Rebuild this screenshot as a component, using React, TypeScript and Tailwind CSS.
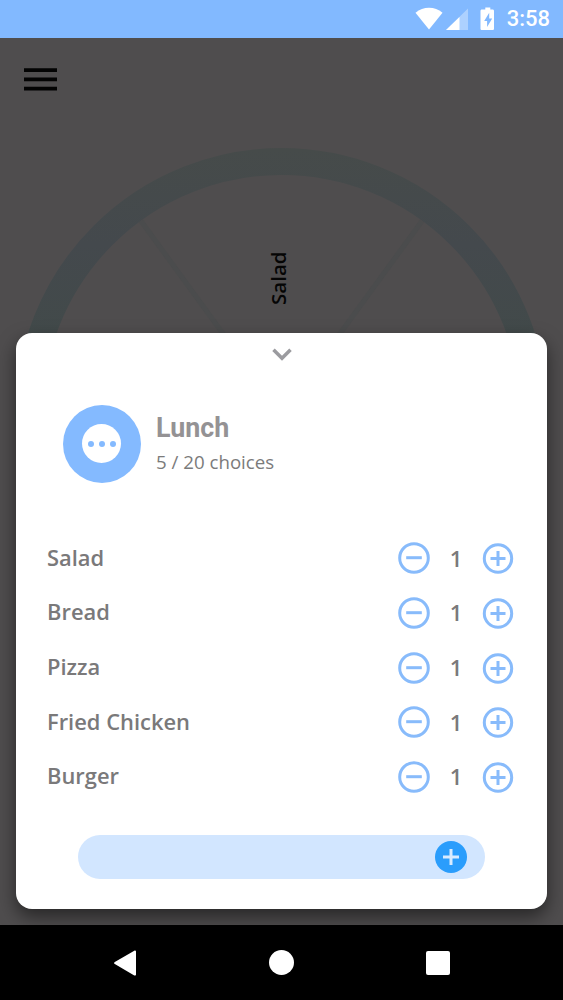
import { useState } from 'react';

const initialChoices = [
  { name: 'Salad', weight: 1 },
  { name: 'Bread', weight: 1 },
  { name: 'Pizza', weight: 1 },
  { name: 'Fried Chicken', weight: 1 },
  { name: 'Burger', weight: 1 },
];

function StatusBar() {
  return (
    <header className="flex h-[38px] shrink-0 items-center justify-end bg-[#82b9ff] pr-[13px] text-white">
      <svg width="82" height="38" viewBox="0 0 82 38" fill="currentColor">
        <path d="M1.500 12.800C5.500 9.500 10 7.800 15 7.800s9.500 1.700 13.500 5L15 29.500z" />
        <path d="M54 8.500V30H32z" opacity="0.35" />
        <path d="M45.500 17v13H32z" />
        <path
          fillRule="evenodd"
          d="M71.300 7.500h5v2.100h2.300c.8 0 1.400.6 1.400 1.400v17.700c0 .8-.6 1.400-1.400 1.400H67.900c-.8 0-1.400-.6-1.400-1.400V11c0-.8.6-1.400 1.400-1.400h3.400zM75.200 12.800l-5 8.200h2.900v6l5.100-8.500h-3z"
        />
      </svg>
      <span className="ml-[11px] font-['Roboto',sans-serif] text-[22px] leading-[40px] font-medium">3:58</span>
    </header>
  );
}

function Wheel() {
  return (
    <svg className="absolute inset-0" width="563" height="887" viewBox="0 38 563 887" fill="none">
      <defs>
        <linearGradient id="rim" x1="0" y1="148" x2="0" y2="340" gradientUnits="userSpaceOnUse">
          <stop offset="0" stopColor="#464b4a" />
          <stop offset="0.5" stopColor="#44494d" />
          <stop offset="1" stopColor="#424a4a" />
        </linearGradient>
      </defs>
      <circle cx="281.500" cy="414" r="252.500" stroke="url(#rim)" strokeWidth="27" />
      <path d="M141 221 281.500 414 422 221" stroke="#4b4c4d" strokeWidth="5" />
      <text
        transform="translate(286 305) rotate(-90)"
        className="font-['Open_Sans',sans-serif] text-[20.500px] font-semibold"
        fill="#050505"
      >
        Salad
      </text>
    </svg>
  );
}

function StepButton({ type, onClick }: { type: 'minus' | 'plus'; onClick: () => void }) {
  return (
    <button onClick={onClick} aria-label={type} className="text-[#88bbfb]">
      {type === 'minus' ? (
        <svg width="32" height="32" viewBox="0 0 32 32" fill="none" stroke="currentColor" strokeWidth="3">
          <circle cx="16" cy="16" r="14.300" />
          <path d="M8.200 15.700h15.600" />
        </svg>
      ) : (
        <svg width="32" height="32" viewBox="0 0 32 32" fill="none" stroke="currentColor" strokeWidth="3">
          <circle cx="16" cy="16.500" r="13.700" />
          <path d="M8.500 16.500h15M16 9v15" />
        </svg>
      )}
    </button>
  );
}

function NavBar() {
  return (
    <nav className="flex h-[75px] shrink-0 items-center justify-between bg-black px-[113px] text-white">
      <svg width="24" height="26" viewBox="0 0 24 26" fill="currentColor">
        <path d="M21.300.7 1.800 11.900c-.9.500-.9 1.700 0 2.200l19.500 11.300c.9.500 1.700.1 1.700-.8V1.500c0-.9-.8-1.300-1.700-.8z" />
      </svg>
      <span className="size-[25px] rounded-full bg-white" />
      <span className="size-6 rounded-[2px] bg-white" />
    </nav>
  );
}

export default function App() {
  const [choices, setChoices] = useState(initialChoices);

  const step = (index: number, delta: number) => {
    setChoices(choices.map((c, i) => (i === index ? { ...c, weight: Math.max(1, c.weight + delta) } : c)));
  };

  return (
    <div className="flex h-[1000px] w-[563px] flex-col overflow-hidden">
      <StatusBar />

      <main className="relative flex flex-1 flex-col overflow-hidden bg-[#4f4d4e]">
        <Wheel />

        <div className="relative h-[295.400px] shrink-0 pt-[30px] pl-6">
          <svg width="33" height="23" viewBox="0 0 33 23" fill="#030303">
            <path d="M0 .3h33V4H0zM0 9.500h33v3.700H0zM0 18.700h33v3.700H0z" />
          </svg>
        </div>

        <section className="relative mx-4 h-[576px] rounded-2xl bg-white pt-[14.600px] shadow-[0_8px_18px_rgba(0,0,0,0.5)]">
          <svg className="mx-auto" width="20" height="13" viewBox="0 0 20 13" fill="none" stroke="#9b9b9f" strokeWidth="3.500">
            <path d="M1.500 1.700 10 10.200l8.500-8.500" />
          </svg>

          <div className="mt-[43.500px] ml-[46.500px] flex h-[79px] items-center gap-[15.500px]">
            <div className="flex size-[78px] items-center justify-center rounded-full bg-[#84baff]">
              <div className="flex size-[39px] items-center justify-center gap-[5px] rounded-full bg-white">
                <span className="size-[6px] rounded-full bg-[#84baff]" />
                <span className="size-[6px] rounded-full bg-[#84baff]" />
                <span className="size-[6px] rounded-full bg-[#84baff]" />
              </div>
            </div>
            <div className="pt-px">
              <h1 className="font-['Roboto',sans-serif] text-[26.800px] leading-[34px] font-bold text-[#949294]">Lunch</h1>
              <p className="font-['Open_Sans',sans-serif] text-[18.700px] leading-[33px] text-[#7b7b7b]">5 / 20 choices</p>
            </div>
          </div>

          <ul className="mt-[47.300px] pr-[33px] pl-[31px]">
            {choices.map((choice, i) => (
              <li key={choice.name} className="flex h-[54.700px] items-center">
                <span className="flex-1 font-['Open_Sans',sans-serif] text-[21.900px] font-semibold text-[#7a797a]">
                  {choice.name}
                </span>
                <StepButton type="minus" onClick={() => step(i, -1)} />
                <span className="w-[52px] text-center font-['Open_Sans',sans-serif] text-[22px] font-semibold text-[#7a797a]">
                  {choice.weight}
                </span>
                <StepButton type="plus" onClick={() => step(i, 1)} />
              </li>
            ))}
          </ul>

          <div className="mt-[30.700px] mr-[62.500px] ml-[62px] flex h-11 items-center justify-end rounded-full bg-[#d2e6ff] pr-[18px]">
            <button aria-label="add" className="rounded-full bg-[#2a9dfc] text-[#d8ebff]">
              <svg width="32" height="32" viewBox="0 0 32 32" fill="none" stroke="currentColor" strokeWidth="3">
                <path d="M8 16h16M16 8v16" />
              </svg>
            </button>
          </div>
        </section>
      </main>

      <NavBar />
    </div>
  );
}
